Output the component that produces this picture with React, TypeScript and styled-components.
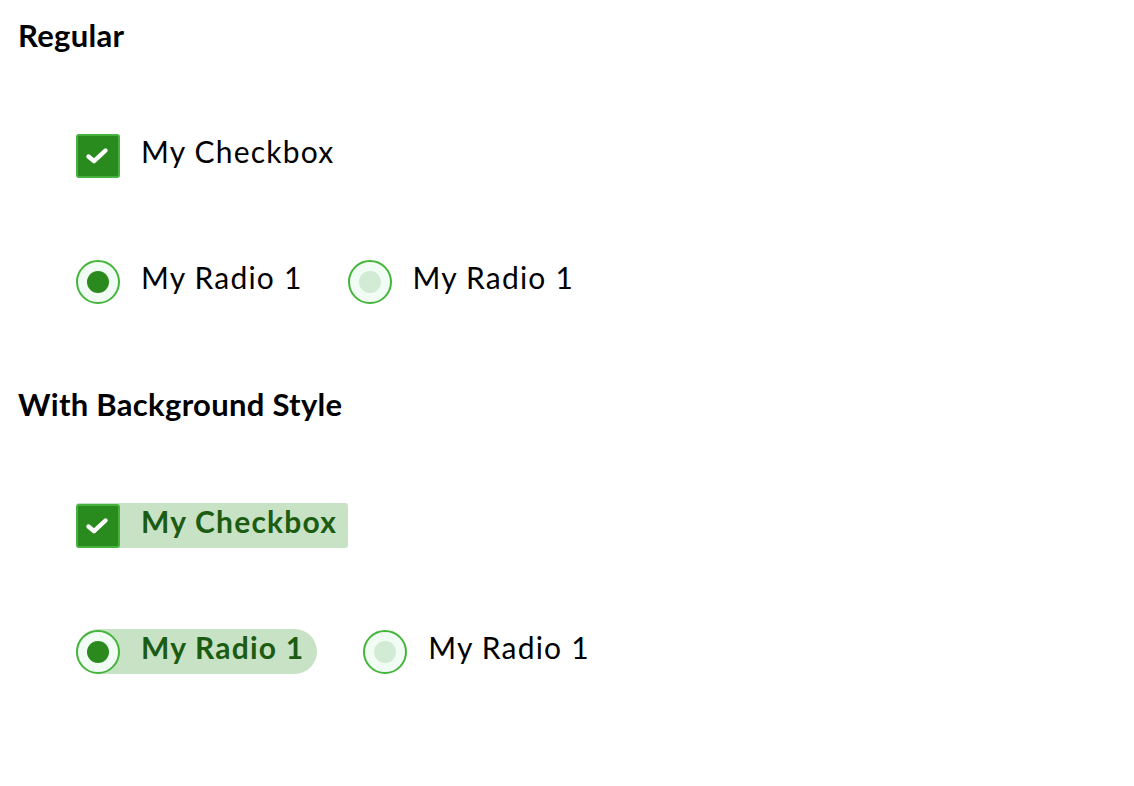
import React from "react";
import styled, { createGlobalStyle } from "styled-components";

const Global = createGlobalStyle`
  html, body { margin: 0; padding: 0; background: #ffffff; }
  body { font-family: Lato, "Noto Sans", sans-serif; color: #000; }
`;

const Page = styled.div`
  padding: 16px 0 0 18px;
  display: flex;
  flex-direction: column;
`;

const Heading = styled.h2<{ $top?: number }>`
  margin: ${(p) => p.$top ?? 0}px 0 0 0;
  font-size: 31px;
  font-weight: 700;
  letter-spacing: 0.3px;
  line-height: 38px;
  color: #000;
`;

const Row = styled.div<{ $top: number }>`
  display: flex;
  align-items: center;
  margin-top: ${(p) => p.$top}px;
  margin-left: 58px;
`;

const Item = styled.label<{ $bg?: boolean; $round?: boolean; $gap?: number }>`
  display: flex;
  align-items: center;
  height: 45px;
  padding-right: ${(p) => (p.$bg ? (p.$round ? 13 : 11) : 0)}px;
  margin-right: ${(p) => p.$gap ?? 0}px;
  background: ${(p) => (p.$bg ? "#c8e2c5" : "transparent")};
  border-radius: ${(p) => (p.$round ? "23px" : "3px")};
  cursor: pointer;
`;

const Box = styled.span`
  width: 44px;
  height: 44px;
  box-sizing: border-box;
  border: 2px solid #48b23f;
  border-radius: 3px;
  background: #298a1d;
  display: flex;
  align-items: center;
  justify-content: center;
  flex: none;
`;

const Circle = styled.span`
  width: 44px;
  height: 44px;
  box-sizing: border-box;
  border: 2px solid #44b53b;
  border-radius: 50%;
  background: #f1fcf4;
  display: flex;
  align-items: center;
  justify-content: center;
  flex: none;
`;

const Dot = styled.span<{ $on: boolean }>`
  width: 22px;
  height: 22px;
  border-radius: 50%;
  background: ${(p) => (p.$on ? "#2a8a1d" : "#d2ebd4")};
`;

const Label = styled.span<{ $bold?: boolean }>`
  margin-left: 21px;
  padding-bottom: 10px;
  font-size: 30px;
  line-height: 36px;
  letter-spacing: 1.2px;
  font-weight: ${(p) => (p.$bold ? 700 : 400)};
  color: ${(p) => (p.$bold ? "#1c5c12" : "#000")};
  white-space: nowrap;
`;

const Check = () => (
  <svg width="24" height="18" viewBox="0 0 24 18" style={{ marginRight: 3 }}>
    <path
      d="M3.5 9.5 L9 14.2 L20.5 3.5"
      fill="none"
      stroke="#fff"
      strokeWidth="4.4"
      strokeLinecap="round"
      strokeLinejoin="round"
    />
  </svg>
);

export default function App() {
  return (
    <>
      <Global />
      <Page>
        <Heading>Regular</Heading>
        <Row $top={79}>
          <Item>
            <Box>
              <Check />
            </Box>
            <Label>My Checkbox</Label>
          </Item>
        </Row>
        <Row $top={81}>
          <Item $gap={45}>
            <Circle>
              <Dot $on />
            </Circle>
            <Label>My Radio 1</Label>
          </Item>
          <Item>
            <Circle>
              <Dot $on={false} />
            </Circle>
            <Label>My Radio 1</Label>
          </Item>
        </Row>
        <Heading $top={81}>With Background Style</Heading>
        <Row $top={80}>
          <Item $bg>
            <Box>
              <Check />
            </Box>
            <Label $bold>My Checkbox</Label>
          </Item>
        </Row>
        <Row $top={81}>
          <Item $bg $round $gap={46}>
            <Circle>
              <Dot $on />
            </Circle>
            <Label $bold>My Radio 1</Label>
          </Item>
          <Item>
            <Circle>
              <Dot $on={false} />
            </Circle>
            <Label>My Radio 1</Label>
          </Item>
        </Row>
      </Page>
    </>
  );
}
